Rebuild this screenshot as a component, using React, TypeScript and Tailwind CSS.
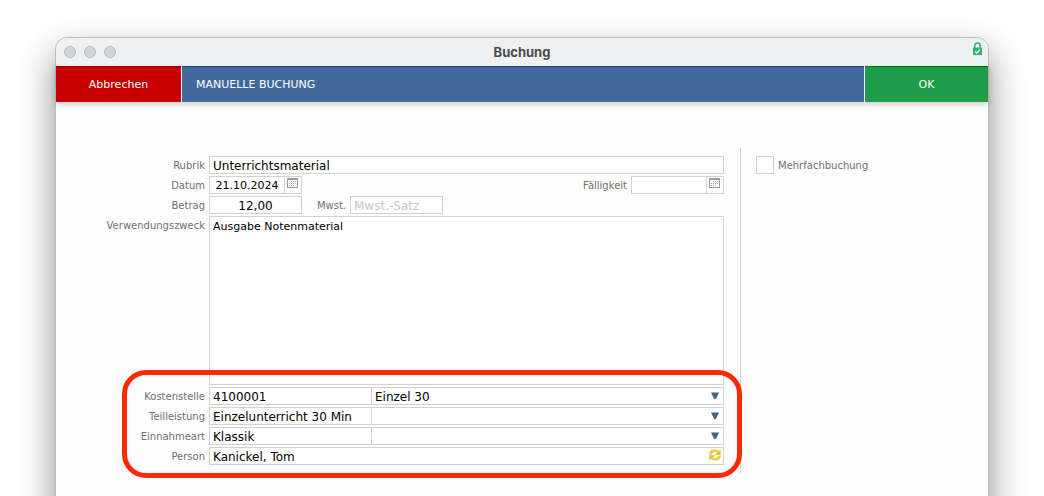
import React from 'react';

const labelClass = "h-[18px] w-[149px] shrink-0 text-right text-[10px] leading-5 text-[#707070]";
const inlineLabelClass = "h-[18px] text-right text-[10px] leading-5 text-[#707070]";
const boxClass = "h-[18px] min-w-0 border border-[#d2d2d2] bg-white px-[3px] leading-4 text-black outline-none";

function CalendarIcon() {
  return (
    <svg viewBox="0 0 11 10" className="w-[11px] h-[10px]" shapeRendering="crispEdges" aria-hidden="true">
      <rect x="0.5" y="0.5" width="10" height="9" fill="#fff" stroke="#9b9b9b" />
      <rect x="0" y="0" width="11" height="2" fill="#9b9b9b" />
      <path d="M4 3.5h5M2 5.5h7M2 7.5h5" stroke="#a8a8a8" strokeDasharray="1 1" />
    </svg>
  );
}

function LockIcon() {
  return (
    <svg viewBox="0 0 9 13" className="w-[9px] h-[13px]" aria-hidden="true">
      <path d="M1.8 6.5V3.6a2.7 2.7 0 0 1 5.4 0v2.9" fill="none" stroke="#35b077" strokeWidth="1.5" />
      <rect x="0" y="5.5" width="9" height="7.5" fill="#35b077" />
      <path d="M2.2 9.5l1.6 1.6 3.2-3.4" fill="none" stroke="#fff" strokeWidth="1.1" />
    </svg>
  );
}

function RefreshIcon() {
  return (
    <svg viewBox="0 0 12 12" className="w-3 h-3" aria-hidden="true">
      <path d="M1.4 5.6C1.6 1.8 6.4 0.4 9 3" fill="none" stroke="#e8d04a" strokeWidth="2.8" />
      <path d="M11.7 0.6V5.9H5.8z" fill="#dfc233" />
      <path d="M10.6 6.6C10.4 10.2 5.6 11.6 3 9" fill="none" stroke="#e8d04a" strokeWidth="2.8" />
      <path d="M0.3 11.4V6.3H6.2z" fill="#dfc233" />
    </svg>
  );
}

interface DateFieldProps {
  id: string;
  value?: string;
}

function DateField({ id, value }: DateFieldProps) {
  return (
    <div className="flex w-[93px]">
      <input id={id} type="text" defaultValue={value} className={`${boxClass} flex-1 pt-px text-center text-[11px]`} />
      <button
        type="button"
        aria-label="Kalender"
        className="flex h-[18px] w-[17px] justify-center border border-l-0 border-[#d2d2d2] bg-white pt-px pr-px"
      >
        <CalendarIcon />
      </button>
    </div>
  );
}

interface LookupRowProps {
  id: string;
  label: string;
  value: string;
  option?: string;
}

function LookupRow({ id, label, value, option = '' }: LookupRowProps) {
  return (
    <div className="flex gap-1">
      <label htmlFor={id} className={labelClass}>{label}</label>
      <div className="flex flex-1">
        <input id={id} type="text" defaultValue={value} className={`${boxClass} w-[163px] pt-px text-[12px]`} />
        <div className="relative flex flex-1">
          <select aria-label={`${label} Auswahl`} className={`${boxClass} flex-1 appearance-none border-l-0 pt-px text-[12px]`}>
            <option>{option}</option>
          </select>
          <svg viewBox="0 0 8 7" className="pointer-events-none absolute top-[5px] right-[5px] w-2 h-[7px]" aria-hidden="true">
            <path d="M0 0.5h8L4.9 7H3.1z" fill="#48627f" />
          </svg>
        </div>
      </div>
    </div>
  );
}

export default function App() {
  return (
    <div className="h-screen overflow-hidden bg-white px-[55px] pt-[37px] font-['DejaVu_Sans',Verdana,sans-serif]">
      <div className="min-h-[560px] rounded-t-xl border border-[#bcbcbc] bg-[#fdfdfd] shadow-[0_16px_36px_rgba(0,0,0,0.45)]">
        {/* Title bar */}
        <div className="relative flex h-7 items-center gap-2 rounded-t-xl bg-[#eff0f2] px-2">
          <span className="w-3 h-3 rounded-full border border-[#b9babc] bg-[#d3d4d6]"></span>
          <span className="w-3 h-3 rounded-full border border-[#b9babc] bg-[#d3d4d6]"></span>
          <span className="w-3 h-3 rounded-full border border-[#b9babc] bg-[#d3d4d6]"></span>
          <h1 className="absolute inset-x-0 text-center font-['Inter',sans-serif] text-[13px] leading-5 font-bold text-[#4a4a4b]">
            Buchung
          </h1>
          <span className="absolute top-1 right-1.5">
            <LockIcon />
          </span>
        </div>

        {/* Toolbar */}
        <div className="flex h-9 text-[11px] text-white shadow-[0_2px_6px_rgba(0,0,0,0.2)]">
          <button type="button" className="w-[125px] border-t border-[#8f0000] bg-[#c80000] pt-px">Abbrechen</button>
          <h2 className="mx-px flex flex-1 items-center border-t border-[#1d427b] bg-[#43689b] px-3.5 pt-px">
            MANUELLE BUCHUNG
          </h2>
          <button type="button" className="w-[123px] border-t border-[#00701d] bg-[#1f9c49] pt-px">OK</button>
        </div>

        <form className="mt-[46px] flex">
          <div className="flex flex-1 flex-col gap-0.5 border-r border-[#d2d2d2] py-2 pr-4">
            <div className="flex gap-1">
              <label htmlFor="rubrik" className={labelClass}>Rubrik</label>
              <input id="rubrik" type="text" defaultValue="Unterrichtsmaterial" className={`${boxClass} flex-1 pt-px text-[12px]`} />
            </div>
            <div className="flex gap-1">
              <label htmlFor="datum" className={labelClass}>Datum</label>
              <DateField id="datum" value="21.10.2024" />
              <label htmlFor="faelligkeit" className={`${inlineLabelClass} ml-auto`}>Fälligkeit</label>
              <DateField id="faelligkeit" />
            </div>
            <div className="flex gap-1">
              <label htmlFor="betrag" className={labelClass}>Betrag</label>
              <input id="betrag" type="text" defaultValue="12,00" className={`${boxClass} w-[93px] pt-px text-center text-[12px]`} />
              <label htmlFor="mwst" className={`${inlineLabelClass} w-10`}>Mwst.</label>
              <input id="mwst" type="text" placeholder="Mwst.-Satz" className={`${boxClass} w-[93px] pt-px text-[12px] placeholder:text-[#c8c8c8]`} />
            </div>
            <div className="flex gap-1">
              <label htmlFor="zweck" className={labelClass}>Verwendungszweck</label>
              <textarea
                id="zweck"
                defaultValue="Ausgabe Notenmaterial"
                className="h-[169px] flex-1 resize-none border border-[#d2d2d2] bg-white px-[3px] py-0.5 text-[11px] leading-4 text-black outline-none"
              />
            </div>

            <div className="relative flex flex-col gap-0.5">
              <LookupRow id="kostenstelle" label="Kostenstelle" value="4100001" option="Einzel 30" />
              <LookupRow id="teilleistung" label="Teilleistung" value="Einzelunterricht 30 Min" />
              <LookupRow id="einnahmeart" label="Einnahmeart" value="Klassik" />
              <div className="flex gap-1">
                <label htmlFor="person" className={labelClass}>Person</label>
                <div className="relative flex flex-1">
                  <input id="person" type="text" defaultValue="Kanickel, Tom" className={`${boxClass} flex-1 pt-px text-[12px]`} />
                  <button type="button" aria-label="Aktualisieren" className="absolute top-0.5 right-[3px]">
                    <RefreshIcon />
                  </button>
                </div>
              </div>
              {/* Highlight around the assignment fields */}
              <div className="pointer-events-none absolute -top-[17px] -right-[18px] -bottom-[13px] left-[66px] rounded-3xl border-[5px] border-[#fe2a05]"></div>
            </div>
          </div>

          <div className="w-[247px] px-[15px] py-2">
            <label className="flex items-center gap-1 text-[10px] text-[#707070]">
              <input type="checkbox" className="h-[18px] w-[18px] appearance-none border border-[#d2d2d2] bg-white" />
              <span className="h-[18px] leading-5">Mehrfachbuchung</span>
            </label>
          </div>
        </form>
      </div>
    </div>
  );
}
